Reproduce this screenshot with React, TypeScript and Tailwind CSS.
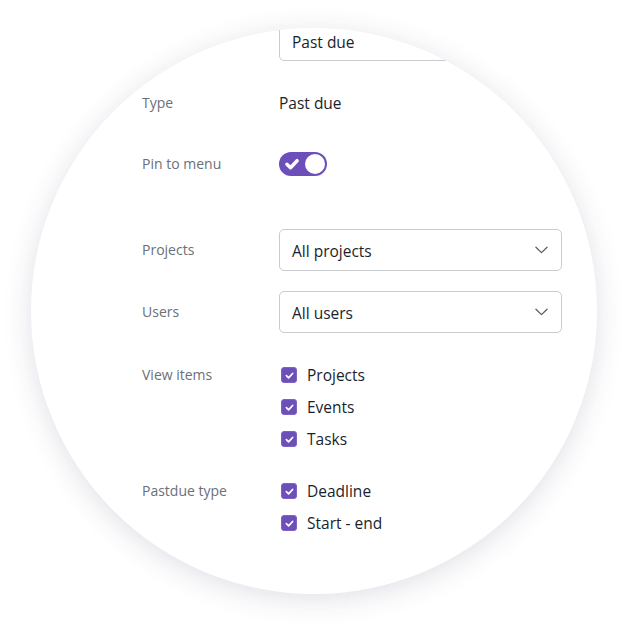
import React from "react";

const purple = "bg-[#6c4fb8]";

const Check = ({ className, width = 1.9 }: { className?: string; width?: number }) => (
	<svg viewBox="0 0 12 12" className={className} fill="none">
		<path d="M2.6 6.2 L5 8.5 L9.4 3.8" stroke="white" strokeWidth={width} strokeLinecap="round" strokeLinejoin="round" />
	</svg>
);

const Chevron = () => (
	<svg viewBox="0 0 14 8" className="w-[13px] h-[8px]" fill="none">
		<path d="M1 1 L7 6.8 L13 1" stroke="#5b5f66" strokeWidth="1.4" strokeLinecap="round" strokeLinejoin="round" />
	</svg>
);

const Select = ({ value }: { value: string }) => (
	<div className="w-[283px] h-[42px] border border-[#c9cbcf] rounded-[5px] flex items-center justify-between pl-[12px] pr-[13px] text-[15.5px] text-[#1a1f2b]">
		<span className="pt-[4px]">{value}</span>
		<Chevron />
	</div>
);

const CheckItem = ({ label }: { label: string }) => (
	<div className="h-[24px] flex items-center gap-[10px] pl-[2px]">
		<span className={`w-[16px] h-[16px] rounded-[3px] ${purple} border border-[#7d63c4] flex items-center justify-center`}>
			<Check className="w-[11px] h-[11px]" />
		</span>
		<span className="pt-[2px] text-[15.5px] text-[#1a1f2b]">{label}</span>
	</div>
);

const Label = ({ children }: { children: React.ReactNode }) => (
	<div className="w-[137px] shrink-0 text-[14px] leading-[24px] text-[#6b7077]">{children}</div>
);

export default function App() {
	return (
		<div className="w-[627px] h-[627px] bg-white pt-[28px] pl-[31px]" style={{ fontFamily: '"Open Sans", sans-serif' }}>
			<div className="w-[566px] h-[566px] rounded-full overflow-hidden bg-white shadow-[0_5px_28px_rgba(40,48,90,0.15)]">
				<div className="pl-[111px] flex flex-col">
					<div className="ml-[137px] -mt-[9px] w-[283px] h-[42px] border border-[#c9cbcf] rounded-[5px] flex items-center pl-[12px] pt-[5px] text-[15.5px] text-[#1a1f2b]">
						Past due
					</div>

					<div className="flex mt-[30px] h-[24px] items-center">
						<Label>Type</Label>
						<span className="pt-[1px] text-[15.5px] text-[#1a1f2b]">Past due</span>
					</div>

					<div className="flex mt-[37px] h-[24px] items-center">
						<Label>Pin to menu</Label>
						<div className={`w-[48px] h-[24px] rounded-full ${purple} flex items-center justify-between pl-[4px] pr-[2px]`}>
							<Check className="w-[18px] h-[18px]" width={2.3} />
							<span className="w-[20px] h-[20px] rounded-full bg-white" />
						</div>
					</div>

					<div className="flex mt-[53px] items-center">
						<Label>Projects</Label>
						<Select value="All projects" />
					</div>

					<div className="flex mt-[20px] items-center">
						<Label>Users</Label>
						<Select value="All users" />
					</div>

					<div className="flex mt-[30px] items-start">
						<Label>View items</Label>
						<div className="flex flex-col gap-[8px]">
							<CheckItem label="Projects" />
							<CheckItem label="Events" />
							<CheckItem label="Tasks" />
						</div>
					</div>

					<div className="flex mt-[28px] items-start">
						<Label>Pastdue type</Label>
						<div className="flex flex-col gap-[8px]">
							<CheckItem label="Deadline" />
							<CheckItem label="Start - end" />
						</div>
					</div>
				</div>
			</div>
		</div>
	);
}
